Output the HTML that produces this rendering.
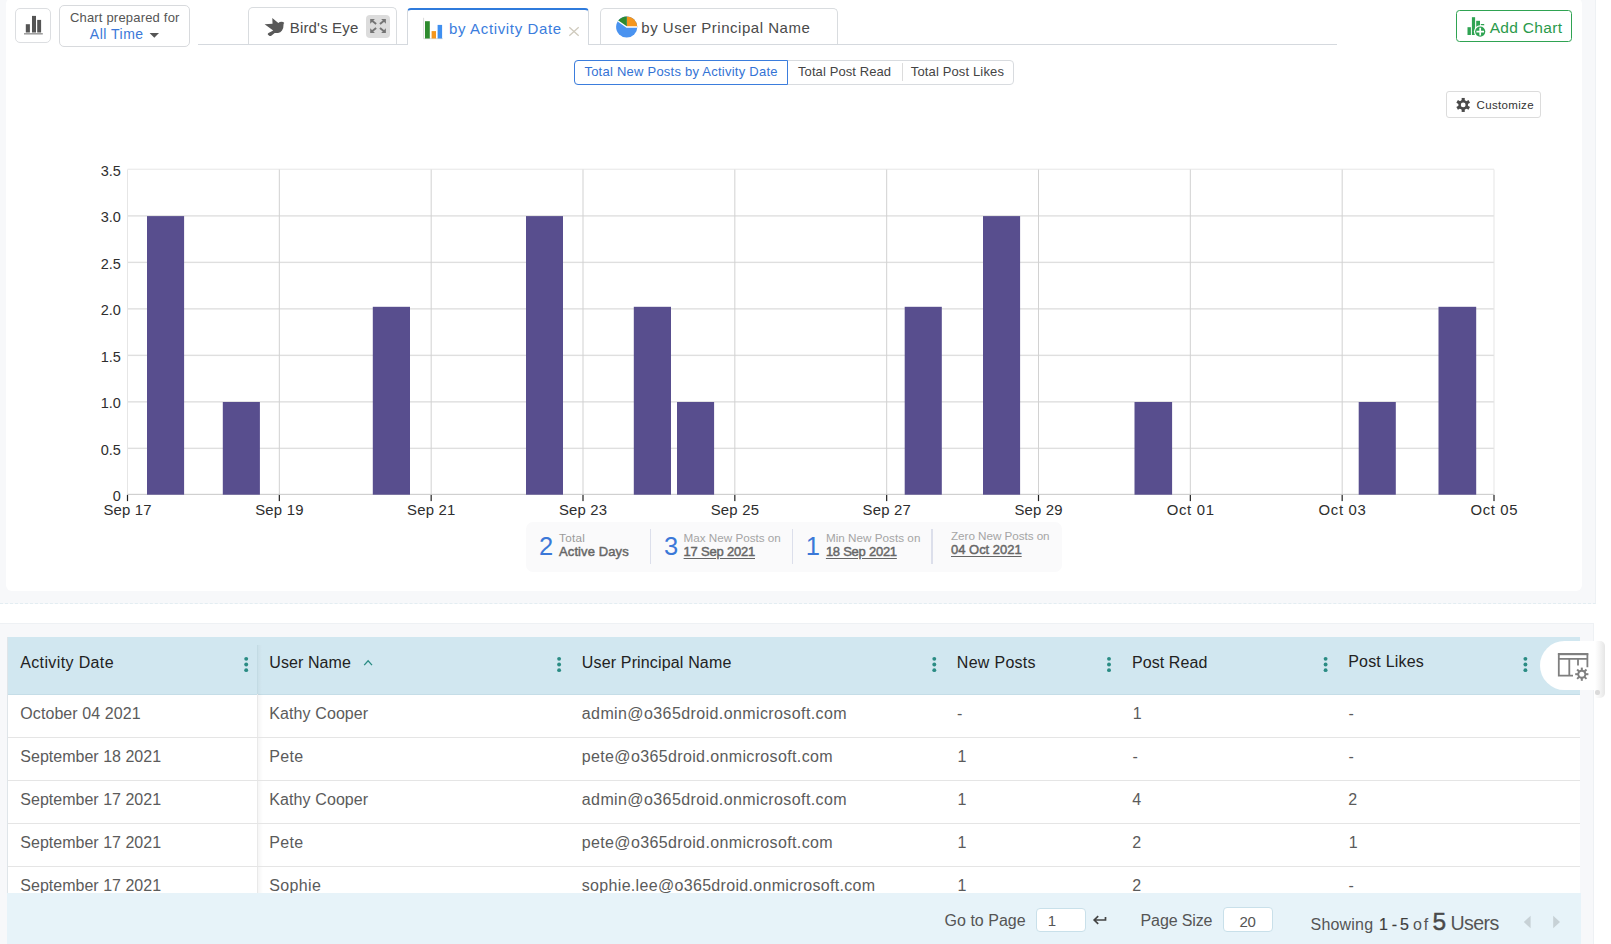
<!DOCTYPE html>
<html><head><meta charset="utf-8"><title>Report</title>
<style>
html,body{margin:0;padding:0}
body{width:1611px;height:944px;overflow:hidden;position:relative;background:#fff;font-family:'Liberation Sans', sans-serif;}
svg{display:block;overflow:visible}
</style></head><body>
<div style="position:absolute;left:0px;top:0px;width:1596px;height:604px;background:#f7f8fa;border-right:1px solid #eef1f4;border-bottom:1px dashed #e3edf2;box-sizing:border-box"></div>
<div style="position:absolute;left:6px;top:-2px;width:1576px;height:592.8px;background:#fff;border-radius:6px"></div>
<div style="position:absolute;left:0px;top:623px;width:1594px;height:321px;background:#f7f8fa;border-right:1px solid #eef1f4;border-top:1px solid #eef1f4;box-sizing:border-box"></div>
<div style="position:absolute;left:15px;top:8px;width:35.5px;height:34.5px;border:1px solid #dcdee1;border-radius:5px;background:#fff;box-sizing:border-box"></div>
<svg style="position:absolute;left:23px;top:14px;" width="22" height="22" viewBox="23.000 14.000 22.000 22.000"><rect x="25.8" y="24.2" width="4.1" height="8.3" fill="#555"/><rect x="32" y="15.9" width="4" height="16.6" fill="#555"/><rect x="37.2" y="19.9" width="3.9" height="12.6" fill="#555"/><rect x="24" y="33.3" width="18.8" height="1.1" fill="#777"/></svg>
<div style="position:absolute;left:59px;top:5px;width:131px;height:42px;border:1px solid #d8dadd;border-radius:5px;background:#fff;box-sizing:border-box"></div>
<span style="position:absolute;left:69.90px;top:10.00px;font-size:13px;line-height:15px;color:#555;font-weight:400;letter-spacing:0.192px;white-space:pre;">Chart prepared for</span>
<span style="position:absolute;left:89.80px;top:26.00px;font-size:14px;line-height:16px;color:#3b78d8;font-weight:400;letter-spacing:0.500px;white-space:pre;">All Time</span>
<svg style="position:absolute;left:149px;top:32px;" width="10" height="6" viewBox="-0.600 -0.900 10.000 6.000"><path d="M0 0H9.4L4.7 4.8Z" fill="#555"/></svg>
<div style="position:absolute;left:248.4px;top:7.2px;width:148.2px;height:37px;border:1px solid #d9dcdf;border-bottom:none;border-radius:5px 5px 0 0;box-sizing:border-box;background:#fff"></div>
<svg style="position:absolute;left:264px;top:17px;" width="21" height="20" viewBox="264.000 17.000 21.000 20.000"><path fill="#595959" d="M272.3 17.9L278.3 23.0Q279.6 21.8 281.5 21.8L283.1 22.1L284.3 23.0L283.6 23.7Q283.7 28 282 30.6Q280.5 32.9 278 33L274.7 33.1L271.3 35.8Q270.2 36.4 269.2 35.7L267.8 34.5Q267.4 33.6 268.5 33L273.2 30.5L264.6 24.2L272.5 23.8Z"/></svg>
<span style="position:absolute;left:289.80px;top:19.00px;font-size:15px;line-height:17px;color:#4a4a4a;font-weight:400;letter-spacing:0.160px;white-space:pre;">Bird's Eye</span>
<div style="position:absolute;left:366.1px;top:15.1px;width:23.9px;height:22.9px;background:#dcdcdc;border-radius:4px"></div>
<svg style="position:absolute;left:366px;top:15px;" width="24" height="23" viewBox="366.000 15.000 24.000 23.000"><path d="M370.20 19.00H374.90L370.20 23.70Z" fill="#747474"/><path d="M371.80 20.60L376.15 24.10" stroke="#747474" stroke-width="1.9" fill="none"/><path d="M385.90 19.00H381.20L385.90 23.70Z" fill="#747474"/><path d="M384.30 20.60L379.95 24.10" stroke="#747474" stroke-width="1.9" fill="none"/><path d="M370.20 33.00H374.90L370.20 28.30Z" fill="#747474"/><path d="M371.80 31.40L376.15 27.90" stroke="#747474" stroke-width="1.9" fill="none"/><path d="M385.90 33.00H381.20L385.90 28.30Z" fill="#747474"/><path d="M384.30 31.40L379.95 27.90" stroke="#747474" stroke-width="1.9" fill="none"/></svg>
<div style="position:absolute;left:407.4px;top:7.8px;width:182px;height:37.2px;border:1px solid #d5d9de;border-top:2.3px solid #2f7bdc;border-bottom:none;border-radius:4px 4px 0 0;box-sizing:border-box;background:#fff"></div>
<svg style="position:absolute;left:423px;top:17px;" width="21" height="23" viewBox="423.000 17.000 21.000 23.000"><path d="M423.6 17.8V38.7H442.8" stroke="#d0d0d0" stroke-width="0.8" fill="none"/><rect x="425" y="21.2" width="4.8" height="17.3" fill="#2e8b2e"/><rect x="431.6" y="31.1" width="4.4" height="7.4" fill="#f5961d"/><rect x="437.6" y="24.9" width="4.5" height="13.6" fill="#3f8ff0"/></svg>
<span style="position:absolute;left:449.00px;top:20.00px;font-size:15px;line-height:17px;color:#3b7ddd;font-weight:400;letter-spacing:0.644px;white-space:pre;">by Activity Date</span>
<svg style="position:absolute;left:569px;top:27px;" width="10" height="9" viewBox="0.000 0.000 10.000 9.000"><path d="M0.3 0.3L9.7 8.7M9.7 0.3L0.3 8.7" stroke="#cfcabd" stroke-width="1.3" fill="none"/></svg>
<div style="position:absolute;left:600.4px;top:7.6px;width:237.2px;height:36.6px;border:1px solid #d9dcdf;border-bottom:none;border-radius:5px 5px 0 0;box-sizing:border-box;background:#fff"></div>
<svg style="position:absolute;left:615px;top:15px;" width="24" height="24" viewBox="615.000 15.000 24.000 24.000"><circle cx="626.7" cy="27.0" r="10.6" fill="#4a93f0"/><path d="M626.7 27.0L626.70 16.40A10.6 10.6 0 0 1 637.30 27.00Z" fill="#f5961d"/><path d="M626.7 27.0L618.02 20.92A10.6 10.6 0 0 1 626.70 16.40Z" fill="#2e8b2e"/><path d="M618.02 20.92L626.7 27.0H637.3000000000001" stroke="#fff" stroke-width="1.3" fill="none"/></svg>
<span style="position:absolute;left:641.30px;top:19.00px;font-size:15px;line-height:17px;color:#4a4a4a;font-weight:400;letter-spacing:0.521px;white-space:pre;">by User Principal Name</span>
<div style="position:absolute;left:198px;top:43.6px;width:210px;height:1px;background:#d5d9de"></div>
<div style="position:absolute;left:589px;top:43.6px;width:747.5px;height:1px;background:#d5d9de"></div>
<div style="position:absolute;left:1456.2px;top:9.9px;width:115.7px;height:31.8px;border:1.3px solid #2fa352;border-radius:3.5px;box-sizing:border-box;background:#fff"></div>
<svg style="position:absolute;left:1465px;top:15px;" width="24" height="24" viewBox="1465.000 15.000 24.000 24.000"><rect x="1467.5" y="27.2" width="3.4" height="7.8" fill="#2fa352"/><rect x="1471.9" y="17.2" width="3.2" height="17.8" fill="#2fa352"/><rect x="1476.2" y="20.8" width="3.8" height="6" fill="#2fa352"/><rect x="1480.8" y="24" width="3.4" height="1.3" fill="#2fa352"/><circle cx="1480.2" cy="31.6" r="6.3" fill="#fff"/><circle cx="1480.2" cy="31.6" r="5.1" fill="#2fa352"/><path d="M1476.4 31.6H1484M1480.200 27.800V35.400" stroke="#fff" stroke-width="1.700"/></svg>
<span style="position:absolute;left:1489.70px;top:19.00px;font-size:15.5px;line-height:17px;color:#2b9a4b;font-weight:400;letter-spacing:0.313px;white-space:pre;">Add Chart</span>
<div style="position:absolute;left:574.1px;top:60px;width:439.8px;height:24.8px;border:1px solid #d8dbdf;border-radius:4px;box-sizing:border-box;background:#fff"></div>
<div style="position:absolute;left:574.1px;top:60px;width:213.6px;height:24.8px;border:1.3px solid #3b7ddd;border-radius:4px 0 0 4px;box-sizing:border-box;background:#fff"></div>
<div style="position:absolute;left:902px;top:63.4px;width:1px;height:17.2px;background:#dcdcdc"></div>
<span style="position:absolute;left:584.40px;top:64.00px;font-size:13px;line-height:15px;color:#3373d5;font-weight:400;letter-spacing:0.239px;white-space:pre;">Total New Posts by Activity Date</span>
<span style="position:absolute;left:798.00px;top:64.00px;font-size:13px;line-height:15px;color:#444;font-weight:400;letter-spacing:0.094px;white-space:pre;">Total Post Read</span>
<span style="position:absolute;left:910.80px;top:64.00px;font-size:13px;line-height:15px;color:#444;font-weight:400;letter-spacing:0.137px;white-space:pre;">Total Post Likes</span>
<div style="position:absolute;left:1446.3px;top:91.2px;width:94.4px;height:26.5px;border:1px solid #dcdcdc;border-radius:3px;box-sizing:border-box;background:#fff"></div>
<svg style="position:absolute;left:1455px;top:97px;" width="17" height="16" viewBox="1455.000 97.000 17.000 16.000"><rect x="1461.65" y="97.95" width="3.1" height="14" fill="#4a4a4a" transform="rotate(0 1463.2 104.95)"/><rect x="1461.65" y="97.95" width="3.1" height="14" fill="#4a4a4a" transform="rotate(60 1463.2 104.95)"/><rect x="1461.65" y="97.95" width="3.1" height="14" fill="#4a4a4a" transform="rotate(120 1463.2 104.95)"/><circle cx="1463.2" cy="104.95" r="4.85" fill="#4a4a4a"/><circle cx="1463.2" cy="104.95" r="2.4" fill="#fff"/></svg>
<span style="position:absolute;left:1476.60px;top:99.00px;font-size:11.5px;line-height:12px;color:#333;font-weight:400;letter-spacing:0.334px;white-space:pre;">Customize</span>
<svg style="position:absolute;left:0px;top:150px;" width="1611" height="380" viewBox="0.000 150.000 1611.000 380.000"><rect x="127.5" y="168.70" width="1366.5" height="1.1" fill="#e9e9e9"/><rect x="127.5" y="215.19" width="1366.5" height="1.4" fill="#dfdfdf"/><rect x="127.5" y="261.68" width="1366.5" height="1.4" fill="#dfdfdf"/><rect x="127.5" y="308.17" width="1366.5" height="1.4" fill="#dfdfdf"/><rect x="127.5" y="354.66" width="1366.5" height="1.4" fill="#dfdfdf"/><rect x="127.5" y="401.15" width="1366.5" height="1.4" fill="#dfdfdf"/><rect x="127.5" y="447.64" width="1366.5" height="1.4" fill="#dfdfdf"/><rect x="127.00" y="169.5" width="1" height="325.2" fill="#e6e6e6"/><rect x="278.83" y="169.5" width="1" height="325.2" fill="#d2d2d2"/><rect x="430.67" y="169.5" width="1" height="325.2" fill="#d2d2d2"/><rect x="582.50" y="169.5" width="1" height="325.2" fill="#d2d2d2"/><rect x="734.33" y="169.5" width="1" height="325.2" fill="#d2d2d2"/><rect x="886.17" y="169.5" width="1" height="325.2" fill="#d2d2d2"/><rect x="1038.00" y="169.5" width="1" height="325.2" fill="#d2d2d2"/><rect x="1189.83" y="169.5" width="1" height="325.2" fill="#d2d2d2"/><rect x="1341.67" y="169.5" width="1" height="325.2" fill="#d2d2d2"/><rect x="1493.50" y="169.5" width="1" height="325.2" fill="#e6e6e6"/><rect x="127.5" y="493.80" width="1366.5" height="1.2" fill="#d0d0d0"/><rect x="147" y="216.1" width="37.1" height="278.6" fill="#584e8e"/><rect x="222.8" y="402" width="37.1" height="92.7" fill="#584e8e"/><rect x="372.8" y="306.8" width="37.2" height="187.9" fill="#584e8e"/><rect x="526" y="216.1" width="37.0" height="278.6" fill="#584e8e"/><rect x="633.8" y="306.8" width="37.2" height="187.9" fill="#584e8e"/><rect x="677" y="402" width="37.1" height="92.7" fill="#584e8e"/><rect x="904.7" y="306.8" width="37.1" height="187.9" fill="#584e8e"/><rect x="983" y="216.1" width="37.1" height="278.6" fill="#584e8e"/><rect x="1134.5" y="402" width="37.6" height="92.7" fill="#584e8e"/><rect x="1358.7" y="402" width="37.1" height="92.7" fill="#584e8e"/><rect x="1438.5" y="306.8" width="37.7" height="187.9" fill="#584e8e"/><rect x="126.90" y="494.90" width="1.2" height="6.2" fill="#222"/><rect x="278.73" y="494.90" width="1.2" height="6.2" fill="#222"/><rect x="430.57" y="494.90" width="1.2" height="6.2" fill="#222"/><rect x="582.40" y="494.90" width="1.2" height="6.2" fill="#222"/><rect x="734.23" y="494.90" width="1.2" height="6.2" fill="#222"/><rect x="886.07" y="494.90" width="1.2" height="6.2" fill="#222"/><rect x="1037.90" y="494.90" width="1.2" height="6.2" fill="#222"/><rect x="1189.73" y="494.90" width="1.2" height="6.2" fill="#222"/><rect x="1341.57" y="494.90" width="1.2" height="6.2" fill="#222"/><rect x="1493.40" y="494.90" width="1.2" height="6.2" fill="#222"/></svg>
<span style="position:absolute;right:1490.10px;top:163.00px;font-size:14.5px;line-height:16px;color:#2e2e2e;font-weight:400;letter-spacing:0.000px;white-space:pre;">3.5</span>
<span style="position:absolute;right:1490.10px;top:209.00px;font-size:14.5px;line-height:16px;color:#2e2e2e;font-weight:400;letter-spacing:0.000px;white-space:pre;">3.0</span>
<span style="position:absolute;right:1490.10px;top:256.00px;font-size:14.5px;line-height:16px;color:#2e2e2e;font-weight:400;letter-spacing:0.000px;white-space:pre;">2.5</span>
<span style="position:absolute;right:1490.10px;top:302.00px;font-size:14.5px;line-height:16px;color:#2e2e2e;font-weight:400;letter-spacing:0.000px;white-space:pre;">2.0</span>
<span style="position:absolute;right:1490.10px;top:349.00px;font-size:14.5px;line-height:16px;color:#2e2e2e;font-weight:400;letter-spacing:0.000px;white-space:pre;">1.5</span>
<span style="position:absolute;right:1490.10px;top:395.00px;font-size:14.5px;line-height:16px;color:#2e2e2e;font-weight:400;letter-spacing:0.000px;white-space:pre;">1.0</span>
<span style="position:absolute;right:1490.10px;top:442.00px;font-size:14.5px;line-height:16px;color:#2e2e2e;font-weight:400;letter-spacing:0.000px;white-space:pre;">0.5</span>
<span style="position:absolute;right:1490.10px;top:488.00px;font-size:14.5px;line-height:16px;color:#2e2e2e;font-weight:400;letter-spacing:0.000px;white-space:pre;">0</span>
<span style="position:absolute;left:-72.40px;width:400px;text-align:center;top:502.00px;font-size:14.9px;line-height:16px;color:#2e2e2e;font-weight:400;letter-spacing:0.199px;white-space:pre;">Sep 17</span>
<span style="position:absolute;left:79.43px;width:400px;text-align:center;top:502.00px;font-size:14.9px;line-height:16px;color:#2e2e2e;font-weight:400;letter-spacing:0.199px;white-space:pre;">Sep 19</span>
<span style="position:absolute;left:231.27px;width:400px;text-align:center;top:502.00px;font-size:14.9px;line-height:16px;color:#2e2e2e;font-weight:400;letter-spacing:0.199px;white-space:pre;">Sep 21</span>
<span style="position:absolute;left:383.10px;width:400px;text-align:center;top:502.00px;font-size:14.9px;line-height:16px;color:#2e2e2e;font-weight:400;letter-spacing:0.199px;white-space:pre;">Sep 23</span>
<span style="position:absolute;left:534.93px;width:400px;text-align:center;top:502.00px;font-size:14.9px;line-height:16px;color:#2e2e2e;font-weight:400;letter-spacing:0.199px;white-space:pre;">Sep 25</span>
<span style="position:absolute;left:686.77px;width:400px;text-align:center;top:502.00px;font-size:14.9px;line-height:16px;color:#2e2e2e;font-weight:400;letter-spacing:0.199px;white-space:pre;">Sep 27</span>
<span style="position:absolute;left:838.60px;width:400px;text-align:center;top:502.00px;font-size:14.9px;line-height:16px;color:#2e2e2e;font-weight:400;letter-spacing:0.199px;white-space:pre;">Sep 29</span>
<span style="position:absolute;left:990.67px;width:400px;text-align:center;top:502.00px;font-size:14.9px;line-height:16px;color:#2e2e2e;font-weight:400;letter-spacing:0.665px;white-space:pre;">Oct 01</span>
<span style="position:absolute;left:1142.50px;width:400px;text-align:center;top:502.00px;font-size:14.9px;line-height:16px;color:#2e2e2e;font-weight:400;letter-spacing:0.665px;white-space:pre;">Oct 03</span>
<span style="position:absolute;left:1294.33px;width:400px;text-align:center;top:502.00px;font-size:14.9px;line-height:16px;color:#2e2e2e;font-weight:400;letter-spacing:0.665px;white-space:pre;">Oct 05</span>
<div style="position:absolute;left:526px;top:522px;width:535.6px;height:50px;background:#fafafb;border-radius:7px"></div>
<div style="position:absolute;left:649.6999999999999px;top:529.3px;width:1.3px;height:34.7px;background:#dcdfeb"></div>
<div style="position:absolute;left:791.6999999999999px;top:529.3px;width:1.3px;height:34.7px;background:#dcdfeb"></div>
<div style="position:absolute;left:931.4px;top:529.3px;width:1.3px;height:34.7px;background:#dcdfeb"></div>
<span style="position:absolute;left:538.90px;top:532.00px;font-size:25.5px;line-height:28px;color:#3b78d8;font-weight:400;letter-spacing:0.000px;white-space:pre;font-weight:400;">2</span>
<span style="position:absolute;left:559.00px;top:531.00px;font-size:11.7px;line-height:13px;color:#9a9a9a;font-weight:400;letter-spacing:0.303px;white-space:pre;">Total</span>
<span style="position:absolute;left:559.00px;top:544.00px;font-size:13px;line-height:15px;color:#666;font-weight:400;letter-spacing:0.106px;white-space:pre;-webkit-text-stroke:0.45px #666;">Active Days</span>
<span style="position:absolute;left:664.00px;top:532.00px;font-size:25.5px;line-height:28px;color:#3b78d8;font-weight:400;letter-spacing:0.000px;white-space:pre;">3</span>
<span style="position:absolute;left:683.60px;top:531.00px;font-size:11.7px;line-height:13px;color:#a5a5a5;font-weight:400;letter-spacing:-0.016px;white-space:pre;">Max New Posts on</span>
<span style="position:absolute;left:683.60px;top:544.00px;font-size:13px;line-height:15px;color:#666;font-weight:400;letter-spacing:-0.213px;white-space:pre;-webkit-text-stroke:0.45px #666;text-decoration:underline;text-underline-offset:1.5px;text-decoration-thickness:1px;">17 Sep 2021</span>
<span style="position:absolute;left:805.80px;top:532.00px;font-size:25.5px;line-height:28px;color:#3b78d8;font-weight:400;letter-spacing:0.000px;white-space:pre;">1</span>
<span style="position:absolute;left:825.90px;top:531.00px;font-size:11.7px;line-height:13px;color:#a5a5a5;font-weight:400;letter-spacing:0.021px;white-space:pre;">Min New Posts on</span>
<span style="position:absolute;left:825.90px;top:544.00px;font-size:13px;line-height:15px;color:#666;font-weight:400;letter-spacing:-0.253px;white-space:pre;-webkit-text-stroke:0.45px #666;text-decoration:underline;text-underline-offset:1.5px;text-decoration-thickness:1px;">18 Sep 2021</span>
<span style="position:absolute;left:951.00px;top:529.00px;font-size:11.7px;line-height:13px;color:#a5a5a5;font-weight:400;letter-spacing:-0.049px;white-space:pre;">Zero New Posts on</span>
<span style="position:absolute;left:951.00px;top:542.00px;font-size:13px;line-height:15px;color:#666;font-weight:400;letter-spacing:-0.013px;white-space:pre;-webkit-text-stroke:0.45px #666;text-decoration:underline;text-underline-offset:1.5px;text-decoration-thickness:1px;">04 Oct 2021</span>
<div style="position:absolute;left:7.7px;top:694.3px;width:1572.6px;height:200px;background:#fff"></div>
<div style="position:absolute;left:7.1000000000000005px;top:637px;width:1px;height:260px;background:#dfe5e9"></div>
<div style="position:absolute;left:7.7px;top:637px;width:1572.6px;height:57.299999999999955px;background:#d1e7f0"></div>
<div style="position:absolute;left:7.7px;top:693.6999999999999px;width:1572.6px;height:1.2px;background:#c5dde7"></div>
<div style="position:absolute;left:257px;top:645px;width:1px;height:49.299999999999955px;background:#c3dbe4"></div>
<div style="position:absolute;left:257px;top:694.3px;width:1px;height:200px;background:#e9e9e9"></div>
<div style="position:absolute;left:258px;top:694.3px;width:5px;height:200px;background:linear-gradient(to right,rgba(0,0,0,0.04),rgba(0,0,0,0))"></div>
<div style="position:absolute;left:258px;top:645px;width:4px;height:49.299999999999955px;background:linear-gradient(to right,rgba(0,0,0,0.03),rgba(0,0,0,0))"></div>
<span style="position:absolute;left:20.20px;top:654.00px;font-size:16px;line-height:17px;color:#222;font-weight:400;letter-spacing:0.373px;white-space:pre;">Activity Date</span>
<span style="position:absolute;left:269.30px;top:654.00px;font-size:16px;line-height:17px;color:#222;font-weight:400;letter-spacing:0.074px;white-space:pre;">User Name</span>
<span style="position:absolute;left:581.80px;top:654.00px;font-size:16px;line-height:17px;color:#222;font-weight:400;letter-spacing:0.155px;white-space:pre;">User Principal Name</span>
<span style="position:absolute;left:956.80px;top:654.00px;font-size:16px;line-height:17px;color:#222;font-weight:400;letter-spacing:0.291px;white-space:pre;">New Posts</span>
<span style="position:absolute;left:1131.90px;top:654.00px;font-size:16px;line-height:17px;color:#222;font-weight:400;letter-spacing:0.098px;white-space:pre;">Post Read</span>
<span style="position:absolute;left:1348.20px;top:653.00px;font-size:16px;line-height:17px;color:#222;font-weight:400;letter-spacing:0.199px;white-space:pre;">Post Likes</span>
<svg style="position:absolute;left:242px;top:655px;" width="9" height="19" viewBox="242.000 655.000 9.000 19.000"><circle cx="246.2" cy="658.85" r="1.95" fill="#2a8c84"/><circle cx="246.2" cy="664.5" r="1.95" fill="#2a8c84"/><circle cx="246.2" cy="670.15" r="1.95" fill="#2a8c84"/></svg>
<svg style="position:absolute;left:555px;top:655px;" width="9" height="19" viewBox="555.000 655.000 9.000 19.000"><circle cx="559.1" cy="658.85" r="1.95" fill="#2a8c84"/><circle cx="559.1" cy="664.5" r="1.95" fill="#2a8c84"/><circle cx="559.1" cy="670.15" r="1.95" fill="#2a8c84"/></svg>
<svg style="position:absolute;left:930px;top:655px;" width="9" height="19" viewBox="930.000 655.000 9.000 19.000"><circle cx="934.3" cy="658.85" r="1.95" fill="#2a8c84"/><circle cx="934.3" cy="664.5" r="1.95" fill="#2a8c84"/><circle cx="934.3" cy="670.15" r="1.95" fill="#2a8c84"/></svg>
<svg style="position:absolute;left:1105px;top:655px;" width="8" height="19" viewBox="1105.000 655.000 8.000 19.000"><circle cx="1109" cy="658.85" r="1.95" fill="#2a8c84"/><circle cx="1109" cy="664.5" r="1.95" fill="#2a8c84"/><circle cx="1109" cy="670.15" r="1.95" fill="#2a8c84"/></svg>
<svg style="position:absolute;left:1321px;top:655px;" width="9" height="19" viewBox="1321.000 655.000 9.000 19.000"><circle cx="1325.6" cy="658.85" r="1.95" fill="#2a8c84"/><circle cx="1325.6" cy="664.5" r="1.95" fill="#2a8c84"/><circle cx="1325.6" cy="670.15" r="1.95" fill="#2a8c84"/></svg>
<svg style="position:absolute;left:1521px;top:655px;" width="9" height="19" viewBox="1521.000 655.000 9.000 19.000"><circle cx="1525.4" cy="658.85" r="1.95" fill="#2a8c84"/><circle cx="1525.4" cy="664.5" r="1.95" fill="#2a8c84"/><circle cx="1525.4" cy="670.15" r="1.95" fill="#2a8c84"/></svg>
<svg style="position:absolute;left:363px;top:659px;" width="11" height="8" viewBox="363.000 659.000 11.000 8.000"><path d="M364.2 665.1L368.1 660.800L372 665.100" stroke="#2a8c84" stroke-width="1.300" fill="none"/></svg>
<span style="position:absolute;left:20.30px;top:705.00px;font-size:16px;line-height:17px;color:#5b5b5b;font-weight:400;letter-spacing:0.078px;white-space:pre;">October 04 2021</span>
<span style="position:absolute;left:269.30px;top:705.00px;font-size:16px;line-height:17px;color:#5b5b5b;font-weight:400;letter-spacing:0.096px;white-space:pre;">Kathy Cooper</span>
<span style="position:absolute;left:581.80px;top:705.00px;font-size:16px;line-height:17px;color:#5b5b5b;font-weight:400;letter-spacing:0.400px;white-space:pre;">admin@o365droid.onmicrosoft.com</span>
<span style="position:absolute;left:957.10px;top:705.00px;font-size:16px;line-height:17px;color:#5b5b5b;font-weight:400;letter-spacing:0.000px;white-space:pre;">-</span>
<span style="position:absolute;left:1132.80px;top:705.00px;font-size:16px;line-height:17px;color:#5b5b5b;font-weight:400;letter-spacing:0.000px;white-space:pre;">1</span>
<span style="position:absolute;left:1348.50px;top:705.00px;font-size:16px;line-height:17px;color:#5b5b5b;font-weight:400;letter-spacing:0.000px;white-space:pre;">-</span>
<div style="position:absolute;left:7.7px;top:736.6999999999999px;width:1572.6px;height:1.2px;background:#e5e5e5"></div>
<span style="position:absolute;left:20.30px;top:748.00px;font-size:16px;line-height:17px;color:#5b5b5b;font-weight:400;letter-spacing:0.016px;white-space:pre;">September 18 2021</span>
<span style="position:absolute;left:269.30px;top:748.00px;font-size:16px;line-height:17px;color:#5b5b5b;font-weight:400;letter-spacing:0.293px;white-space:pre;">Pete</span>
<span style="position:absolute;left:581.80px;top:748.00px;font-size:16px;line-height:17px;color:#5b5b5b;font-weight:400;letter-spacing:0.359px;white-space:pre;">pete@o365droid.onmicrosoft.com</span>
<span style="position:absolute;left:957.40px;top:748.00px;font-size:16px;line-height:17px;color:#5b5b5b;font-weight:400;letter-spacing:0.000px;white-space:pre;">1</span>
<span style="position:absolute;left:1132.50px;top:748.00px;font-size:16px;line-height:17px;color:#5b5b5b;font-weight:400;letter-spacing:0.000px;white-space:pre;">-</span>
<span style="position:absolute;left:1348.50px;top:748.00px;font-size:16px;line-height:17px;color:#5b5b5b;font-weight:400;letter-spacing:0.000px;white-space:pre;">-</span>
<div style="position:absolute;left:7.7px;top:779.6999999999999px;width:1572.6px;height:1.2px;background:#e5e5e5"></div>
<span style="position:absolute;left:20.30px;top:791.00px;font-size:16px;line-height:17px;color:#5b5b5b;font-weight:400;letter-spacing:0.016px;white-space:pre;">September 17 2021</span>
<span style="position:absolute;left:269.30px;top:791.00px;font-size:16px;line-height:17px;color:#5b5b5b;font-weight:400;letter-spacing:0.096px;white-space:pre;">Kathy Cooper</span>
<span style="position:absolute;left:581.80px;top:791.00px;font-size:16px;line-height:17px;color:#5b5b5b;font-weight:400;letter-spacing:0.400px;white-space:pre;">admin@o365droid.onmicrosoft.com</span>
<span style="position:absolute;left:957.40px;top:791.00px;font-size:16px;line-height:17px;color:#5b5b5b;font-weight:400;letter-spacing:0.000px;white-space:pre;">1</span>
<span style="position:absolute;left:1132.20px;top:791.00px;font-size:16px;line-height:17px;color:#5b5b5b;font-weight:400;letter-spacing:0.000px;white-space:pre;">4</span>
<span style="position:absolute;left:1348.20px;top:791.00px;font-size:16px;line-height:17px;color:#5b5b5b;font-weight:400;letter-spacing:0.000px;white-space:pre;">2</span>
<div style="position:absolute;left:7.7px;top:822.6999999999999px;width:1572.6px;height:1.2px;background:#e5e5e5"></div>
<span style="position:absolute;left:20.30px;top:834.00px;font-size:16px;line-height:17px;color:#5b5b5b;font-weight:400;letter-spacing:0.016px;white-space:pre;">September 17 2021</span>
<span style="position:absolute;left:269.30px;top:834.00px;font-size:16px;line-height:17px;color:#5b5b5b;font-weight:400;letter-spacing:0.293px;white-space:pre;">Pete</span>
<span style="position:absolute;left:581.80px;top:834.00px;font-size:16px;line-height:17px;color:#5b5b5b;font-weight:400;letter-spacing:0.359px;white-space:pre;">pete@o365droid.onmicrosoft.com</span>
<span style="position:absolute;left:957.40px;top:834.00px;font-size:16px;line-height:17px;color:#5b5b5b;font-weight:400;letter-spacing:0.000px;white-space:pre;">1</span>
<span style="position:absolute;left:1132.20px;top:834.00px;font-size:16px;line-height:17px;color:#5b5b5b;font-weight:400;letter-spacing:0.000px;white-space:pre;">2</span>
<span style="position:absolute;left:1348.80px;top:834.00px;font-size:16px;line-height:17px;color:#5b5b5b;font-weight:400;letter-spacing:0.000px;white-space:pre;">1</span>
<div style="position:absolute;left:7.7px;top:865.6999999999999px;width:1572.6px;height:1.2px;background:#e5e5e5"></div>
<span style="position:absolute;left:20.30px;top:877.00px;font-size:16px;line-height:17px;color:#5b5b5b;font-weight:400;letter-spacing:0.016px;white-space:pre;">September 17 2021</span>
<span style="position:absolute;left:269.30px;top:877.00px;font-size:16px;line-height:17px;color:#5b5b5b;font-weight:400;letter-spacing:0.354px;white-space:pre;">Sophie</span>
<span style="position:absolute;left:581.80px;top:877.00px;font-size:16px;line-height:17px;color:#5b5b5b;font-weight:400;letter-spacing:0.318px;white-space:pre;">sophie.lee@o365droid.onmicrosoft.com</span>
<span style="position:absolute;left:957.40px;top:877.00px;font-size:16px;line-height:17px;color:#5b5b5b;font-weight:400;letter-spacing:0.000px;white-space:pre;">1</span>
<span style="position:absolute;left:1132.20px;top:877.00px;font-size:16px;line-height:17px;color:#5b5b5b;font-weight:400;letter-spacing:0.000px;white-space:pre;">2</span>
<span style="position:absolute;left:1348.50px;top:877.00px;font-size:16px;line-height:17px;color:#5b5b5b;font-weight:400;letter-spacing:0.000px;white-space:pre;">-</span>
<div style="position:absolute;left:6.5px;top:893.3px;width:1574px;height:51px;background:#e7f3f9"></div>
<span style="position:absolute;left:944.60px;top:912.00px;font-size:16px;line-height:17px;color:#555;font-weight:400;letter-spacing:0.005px;white-space:pre;">Go to Page</span>
<div style="position:absolute;left:1036px;top:908px;width:50px;height:23.5px;background:#fff;border:1px solid #c9e0ea;border-radius:4px;box-sizing:border-box"></div>
<span style="position:absolute;left:1047.70px;top:912.00px;font-size:15px;line-height:17px;color:#555;font-weight:400;letter-spacing:0.000px;white-space:pre;">1</span>
<svg style="position:absolute;left:1092px;top:914px;" width="15" height="12" viewBox="1092.000 914.000 15.000 12.000"><path d="M1105.5 917V920H1094.6M1098.200 916.200L1094.200 920L1098.200 923.800" stroke="#444" stroke-width="1.700" fill="none"/></svg>
<span style="position:absolute;left:1140.60px;top:912.00px;font-size:16px;line-height:17px;color:#555;font-weight:400;letter-spacing:-0.142px;white-space:pre;">Page Size</span>
<div style="position:absolute;left:1223.3px;top:907.4px;width:49.3px;height:24.7px;background:#fff;border:1px solid #c9e0ea;border-radius:4px;box-sizing:border-box"></div>
<span style="position:absolute;left:1239.40px;top:913.00px;font-size:15px;line-height:17px;color:#555;font-weight:400;letter-spacing:-0.287px;white-space:pre;">20</span>
<span style="position:absolute;left:1310.60px;top:916.00px;font-size:16px;line-height:17px;color:#555;font-weight:400;letter-spacing:0.187px;white-space:pre;">Showing</span>
<span style="position:absolute;left:1379.00px;top:916.00px;font-size:16px;line-height:17px;color:#3d3d3d;font-weight:400;letter-spacing:0.000px;white-space:pre;-webkit-text-stroke:0.2px #3d3d3d;">1</span>
<span style="position:absolute;left:1391.80px;top:916.00px;font-size:16px;line-height:17px;color:#3d3d3d;font-weight:400;letter-spacing:0.000px;white-space:pre;-webkit-text-stroke:0.2px #3d3d3d;">-</span>
<span style="position:absolute;left:1400.00px;top:916.00px;font-size:16px;line-height:17px;color:#3d3d3d;font-weight:400;letter-spacing:0.000px;white-space:pre;-webkit-text-stroke:0.2px #3d3d3d;">5</span>
<span style="position:absolute;left:1413.00px;top:916.00px;font-size:16px;line-height:17px;color:#555;font-weight:400;letter-spacing:1.756px;white-space:pre;">of</span>
<span style="position:absolute;left:1432.40px;top:908.00px;font-size:24.5px;line-height:27px;color:#4a4a4a;font-weight:400;letter-spacing:0.000px;white-space:pre;-webkit-text-stroke:0.45px #4a4a4a;">5</span>
<span style="position:absolute;left:1450.40px;top:912.00px;font-size:19.6px;line-height:22px;color:#555;font-weight:400;letter-spacing:-0.543px;white-space:pre;">Users</span>
<svg style="position:absolute;left:1523px;top:915px;" width="9" height="14" viewBox="0.000 0.000 9.000 14.000"><path d="M7.6 0.8V13.200L0.800 7Z" fill="#c7d1d6"/></svg>
<svg style="position:absolute;left:1552px;top:915px;" width="9" height="14" viewBox="0.000 0.000 9.000 14.000"><path d="M1.2 0.8V13.200L8 7Z" fill="#c7d1d6"/></svg>
<div style="position:absolute;left:1539.6px;top:640.8px;width:59.4px;height:49px;background:#fff;border-radius:24.5px 3px 0 24.5px"></div>
<div style="position:absolute;left:1595px;top:641px;width:10px;height:57px;background:linear-gradient(to right,#ffffff 0,#f6f6f6 40%,#e6e6e6 100%);border-radius:0 5px 5px 0"></div>
<div style="position:absolute;left:1595px;top:690px;width:4.6px;height:5.2px;background:#dadada;border-radius:2px"></div>
<svg style="position:absolute;left:1555px;top:650px;" width="40" height="36" viewBox="1555.000 650.000 40.000 36.000"><path d="M1558.8 653.6V675.700H1573M1569.300 658.900V675.700M1578 658.900V665.500M1587.400 653.600V667.200M1558 658.900H1588.200" stroke="#7f7f7f" stroke-width="1.800" fill="none"/><path d="M1557.9 654.1H1588.300" stroke="#7f7f7f" stroke-width="2.200" fill="none"/><rect x="1580.8" y="667.6" width="2" height="13.2" fill="#7f7f7f" transform="rotate(0 1581.8 674.2)"/><rect x="1580.8" y="667.6" width="2" height="13.2" fill="#7f7f7f" transform="rotate(45 1581.8 674.2)"/><rect x="1580.8" y="667.6" width="2" height="13.2" fill="#7f7f7f" transform="rotate(90 1581.8 674.2)"/><rect x="1580.8" y="667.6" width="2" height="13.2" fill="#7f7f7f" transform="rotate(135 1581.8 674.2)"/><circle cx="1581.8" cy="674.2" r="4.5" fill="#7f7f7f"/><circle cx="1581.8" cy="674.2" r="2.5" fill="#fff"/></svg>
</body></html>
